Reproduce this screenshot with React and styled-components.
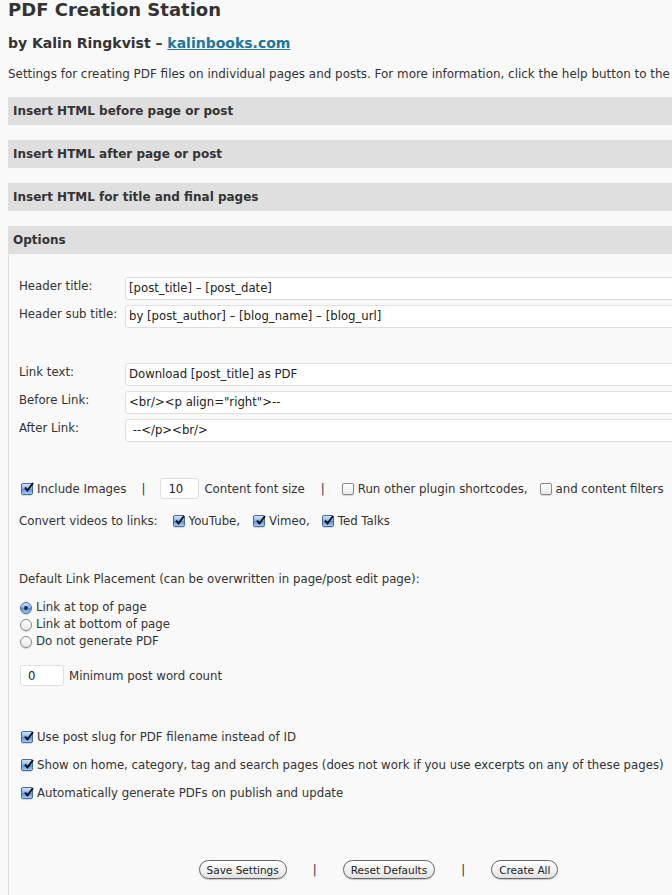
import React from "react";
import styled, { createGlobalStyle } from "styled-components";

const Global = createGlobalStyle`
  html, body {
    margin: 0;
    padding: 0;
    background: #f9f9f9;
    overflow: hidden;
  }
  body {
    font-family: "DejaVu Sans", "Lucida Grande", Verdana, sans-serif;
    color: #333;
    font-size: 11.75px;
  }
`;

const Page = styled.div`
  width: 730px;
  padding-left: 8px;
`;

const Title = styled.h2`
  margin: 0;
  font-size: 18px;
  line-height: 20px;
  font-weight: bold;
  color: #333;
`;

const Byline = styled.h3`
  margin: 14px 0 0;
  font-size: 14px;
  line-height: 18px;
  font-weight: bold;
  color: #333;
  a {
    color: #21759b;
    text-decoration: underline;
  }
`;

const Intro = styled.p`
  margin: 14px 0 0;
  font-size: 11.93px;
  line-height: 16px;
  white-space: nowrap;
`;

const Bar = styled.div`
  background: #dfdfdf;
  height: 28px;
  line-height: 28px;
  padding-left: 5px;
  font-weight: bold;
  font-size: 12px;
  margin-top: ${(p) => p.$top || 15}px;
`;

const Panel = styled.div`
  border-left: 1px solid #dfdfdf;
  padding: 18px 0 0 10px;
  height: 700px;
`;

const FieldRow = styled.div`
  display: flex;
  align-items: flex-start;
  margin-top: ${(p) => p.$top || 5}px;
`;

const Label = styled.label`
  width: 106px;
  padding-top: 1px;
  line-height: 16px;
`;

const TextBox = styled.div`
  flex: 1;
  height: 21px;
  line-height: 21px;
  background: #fff;
  border: 1px solid #dfdfdf;
  border-radius: 3px;
  padding: 0 3px;
  font-size: 11.7px;
  white-space: pre;
  color: #222;
`;

const SmallBox = styled.div`
  width: ${(p) => p.$w}px;
  height: 21px;
  line-height: 21px;
  background: #fff;
  border: 1px solid #dfdfdf;
  border-radius: 3px;
  padding: 0 7px;
  box-sizing: border-box;
  font-size: 11.7px;
  color: #222;
`;

const Line = styled.div`
  display: flex;
  align-items: center;
  white-space: nowrap;
  line-height: 16px;
  margin-top: ${(p) => p.$top || 0}px;
  padding-left: ${(p) => p.$pl || 0}px;
`;

const Sep = styled.span`
  color: #333;
  padding: 0 ${(p) => p.$pl || 13}px 0 ${(p) => p.$pr || p.$pl || 13}px;
`;

const Check = styled.span`
  display: inline-flex;
  align-items: center;
  justify-content: center;
  width: 12px;
  height: 12px;
  box-sizing: border-box;
  border: 1px solid ${(p) => (p.$on ? "#4a6a98" : "#8a8a8a")};
  border-radius: ${(p) => (p.$round ? "50%" : "2px")};
  background: ${(p) =>
    p.$on
      ? "linear-gradient(#d6e6fa, #7fb0ea 50%, #4d8ee0 51%, #a6cdf6)"
      : "linear-gradient(#ffffff, #e8e8e8)"};
  margin-right: 4px;
  flex: none;
  box-shadow: 0 1px 1px rgba(0, 0, 0, 0.15);
`;

const Dot = styled.span`
  width: 4px;
  height: 4px;
  border-radius: 50%;
  background: #1b2a40;
`;

const Tick = () => (
  <svg width="11" height="11" viewBox="0 0 11 11" style={{ marginTop: -2, marginRight: -2 }}>
    <path d="M2 5.5 L4.5 8.5 L10 1" fill="none" stroke="#111" strokeWidth="2" />
  </svg>
);

const Item = styled.span`
  display: inline-flex;
  align-items: center;
  margin-right: ${(p) => p.$gap || 0}px;
`;

const CheckItem = ({ on, children, gap }) => (
  <Item $gap={gap}>
    <Check $on={on}>{on && <Tick />}</Check>
    {children}
  </Item>
);

const Radio = ({ on, children }) => (
  <Item>
    <Check $on={on} $round>
      {on && <Dot />}
    </Check>
    {children}
  </Item>
);

const Inline = styled.span`
  margin-left: ${(p) => p.$ml || 0}px;
  margin-right: ${(p) => p.$mr || 0}px;
`;

const RadioList = styled.div`
  margin-top: 12px;
  padding-left: 1px;
  display: flex;
  flex-direction: column;
  line-height: 17px;
`;

const Buttons = styled.div`
  display: flex;
  justify-content: center;
  align-items: center;
  margin-top: 59px;
`;

const Button = styled.button`
  font-family: "DejaVu Sans", "Lucida Grande", sans-serif;
  font-size: 10.5px;
  color: #222;
  height: 19px;
  padding: 0 7px;
  border: 1px solid #666;
  border-radius: 10px;
  background: linear-gradient(#ffffff, #f0f0f0 60%, #e2e2e2);
  box-shadow: 0 1px 1px rgba(0, 0, 0, 0.2);
`;

export default function App() {
  return (
    <Page>
      <Global />
      <Title>PDF Creation Station</Title>
      <Byline>
        by Kalin Ringkvist – <a href="#">kalinbooks.com</a>
      </Byline>
      <Intro>
        Settings for creating PDF files on individual pages and posts. For more information, click the
        help button to the
      </Intro>
      <Bar $top={15}>Insert HTML before page or post</Bar>
      <Bar>Insert HTML after page or post</Bar>
      <Bar>Insert HTML for title and final pages</Bar>
      <Bar>Options</Bar>
      <Panel>
        <FieldRow $top={0}>
          <Label>Header title:</Label>
          <TextBox>[post_title] – [post_date]</TextBox>
        </FieldRow>
        <FieldRow>
          <Label>Header sub title:</Label>
          <TextBox>by [post_author] – [blog_name] – [blog_url]</TextBox>
        </FieldRow>
        <FieldRow $top={35}>
          <Label>Link text:</Label>
          <TextBox>Download [post_title] as PDF</TextBox>
        </FieldRow>
        <FieldRow>
          <Label>Before Link:</Label>
          <TextBox>{'<br/><p align="right">--'}</TextBox>
        </FieldRow>
        <FieldRow>
          <Label>After Link:</Label>
          <TextBox>{" --</p><br/>"}</TextBox>
        </FieldRow>

        <Line $top={36} $pl={2}>
          <CheckItem on>Include Images</CheckItem>
          <Sep $pl={15}>|</Sep>
          <SmallBox $w={39}>10</SmallBox>
          <Inline $ml={5}>Content font size</Inline>
          <Sep $pl={17} $pr={16}>|</Sep>
          <CheckItem gap={12}>Run other plugin shortcodes,</CheckItem>
          <CheckItem>and content filters</CheckItem>
        </Line>
        <Line $top={14}>
          <Inline $mr={15}>Convert videos to links:</Inline>
          <CheckItem on gap={13}>YouTube,</CheckItem>
          <CheckItem on gap={12}>Vimeo,</CheckItem>
          <CheckItem on>Ted Talks</CheckItem>
        </Line>
        <Line $top={42}>Default Link Placement (can be overwritten in page/post edit page):</Line>
        <RadioList>
          <Radio on>Link at top of page</Radio>
          <Radio>Link at bottom of page</Radio>
          <Radio>Do not generate PDF</Radio>
        </RadioList>
        <Line $top={15} $pl={1}>
          <SmallBox $w={44}>0</SmallBox>
          <Inline $ml={5}>Minimum post word count</Inline>
        </Line>
        <Line $top={43} $pl={2}>
          <CheckItem on>Use post slug for PDF filename instead of ID</CheckItem>
        </Line>
        <Line $top={12} $pl={2}>
          <CheckItem on>
            Show on home, category, tag and search pages (does not work if you use excerpts on any of
            these pages)
          </CheckItem>
        </Line>
        <Line $top={12} $pl={2}>
          <CheckItem on>Automatically generate PDFs on publish and update</CheckItem>
        </Line>
        <Buttons>
          <Button>Save Settings</Button>
          <Sep $pl={26}>|</Sep>
          <Button>Reset Defaults</Button>
          <Sep $pl={26}>|</Sep>
          <Button>Create All</Button>
        </Buttons>
      </Panel>
    </Page>
  );
}
